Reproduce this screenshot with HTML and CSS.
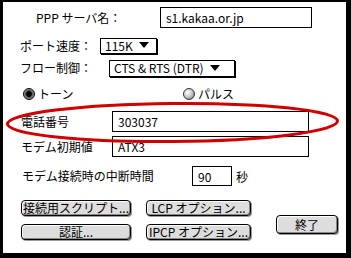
FILE: index.html
```html
<!DOCTYPE html>
<html lang="ja">
<head>
<meta charset="UTF-8">
<title>PPP 設定</title>
<link rel="stylesheet" href="styles.css">
</head>
<body>
    <div class="dialog">
        <!-- server name -->
        <div class="row row-server">
            <span class="label label-server">PPP サーバ名：</span>
            <span class="field field-server">s1.kakaa.or.jp</span>
        </div>

        <!-- port speed -->
        <div class="row row-port">
            <span class="label label-port">ポート速度：</span>
            <span class="popup popup-port">115K <i class="arrow"></i></span>
        </div>

        <!-- flow control -->
        <div class="row row-flow">
            <span class="label label-flow">フロー制御：</span>
            <span class="popup popup-flow">CTS &amp; RTS (DTR) <i class="arrow"></i></span>
        </div>

        <!-- dial mode -->
        <div class="row row-radio">
            <span class="radio radio-tone"><i class="dot on"></i>トーン</span>
            <span class="radio radio-pulse"><i class="dot"></i>パルス</span>
        </div>

        <div class="row row-phone">
            <span class="label label-wide">電話番号</span>
            <span class="field field-wide">303037</span>
        </div>

        <div class="row row-init">
            <span class="label label-wide">モデム初期値</span>
            <span class="field field-wide">ATX3</span>
        </div>

        <div class="row row-wait">
            <span class="label label-wait">モデム接続時の中断時間</span>
            <span class="field field-wait">90</span>
            <span class="unit">秒</span>
        </div>

        <!-- buttons -->
        <div class="buttons">
            <span class="btn">接続用スクリプト...</span>
            <span class="btn">LCP オプション...</span>
            <span class="btn btn-done">終了</span>
            <span class="btn">認証...</span>
            <span class="btn">IPCP オプション...</span>
        </div>
    </div>

    <!-- red circle drawn over the phone row -->
    <svg class="mark" width="351" height="258" viewBox="0 0 351 258">
        <ellipse cx="172.5" cy="122.5" rx="165" ry="19" fill="none" stroke="#d00000" stroke-width="3" transform="rotate(-0.5 172.5 122.5)"/>
    </svg>
</body>
</html>
```

FILE: styles.css
```css
/* page */
body {
    margin: 0;
    position: relative;
    width: 351px;
    height: 258px;
    background: #000;
    font-family: "Noto Sans CJK JP", sans-serif;
    font-size: 12px;
    color: #000;
}

/* dialog window */
.dialog {
    box-sizing: border-box;
    width: 351px;
    height: 258px;
    background: #fff;
    border-style: solid;
    border-color: #000;
    border-width: 2px 5px 5px 3px;
    padding: 5px 0 0 17px;
}

.row {
    display: flex;
    align-items: center;
}

.label {
    line-height: 14px;
    white-space: nowrap;
}

/* text fields */
.field {
    box-sizing: border-box;
    height: 100%;
    border: 1px solid #000;
    padding: 0 5px;
    display: flex;
    align-items: center;
}

/* popup menus */
.popup {
    box-sizing: border-box;
    height: 16px;
    border: 1px solid #000;
    box-shadow: 1px 1px 0 #000;
    padding: 0 4px 1px 4px;
    display: flex;
    align-items: center;
    white-space: pre;
}

.arrow {
    display: inline-block;
    width: 0;
    height: 0;
    border-left: 5px solid transparent;
    border-right: 5px solid transparent;
    border-top: 6px solid #000;
    margin-left: 4px;
}

/* row 1 */
.row-server { height: 21px; }
.label-server { width: 124px; padding-left: 16px; }
.field-server { width: 152px; }

/* row 2 */
.row-port { height: 17px; margin-top: 9px; }
.label-port { width: 80px; }
.popup-port { width: 57px; }

/* row 3 */
.row-flow { height: 18px; margin-top: 5px; }
.label-flow { width: 89px; }
.popup-flow { width: 126px; height: 17px; }

/* radio buttons */
.row-radio { height: 12px; margin-top: 11px; }
.radio {
    display: flex;
    align-items: center;
    gap: 3px;
    line-height: 12px;
}
.radio-tone { margin-left: 3px; width: 160px; }

.dot {
    box-sizing: border-box;
    width: 12px;
    height: 12px;
    border-radius: 50%;
    border: 1px solid #333;
    background: radial-gradient(circle at 35% 35%, #fff 0, #ccc 45%, #777 100%);
}
.dot.on {
    border-color: #000;
    background: radial-gradient(circle, #000 0 2.5px, #444 3px, #999 5px);
}

/* phone and init string */
.row-phone { height: 21px; margin-top: 11px; }
.row-init { height: 21px; margin-top: 4px; }
.label-wide { width: 92px; padding-left: 1px; box-sizing: border-box; }
.field-wide { width: 197px; }

/* wait time */
.row-wait { height: 20px; margin-top: 9px; }
.label-wait { width: 172px; padding-left: 2px; box-sizing: border-box; }
.field-wait { width: 40px; }
.unit { margin-left: 4px; }

/* bottom buttons */
.buttons {
    display: grid;
    grid-template-columns: 110px 105px 72px;
    grid-template-rows: 16px 16px;
    column-gap: 15px;
    row-gap: 8px;
    margin: 14px 0 0 1px;
}

.btn {
    box-sizing: border-box;
    border: 1px solid #000;
    border-radius: 4px;
    background: #ddd;
    box-shadow: inset 1px 1px 0 #fff, inset -1px -1px 0 #888, 1px 1px 0 #999;
    display: flex;
    align-items: center;
    justify-content: center;
    line-height: 14px;
    white-space: nowrap;
}

.btn-done {
    grid-column: 3;
    grid-row: 1 / 3;
    height: 19px;
    margin-top: 15px;
    margin-left: 10px;
}

/* red mark */
.mark {
    position: absolute;
    left: 0;
    top: 0;
    pointer-events: none;
}
```
